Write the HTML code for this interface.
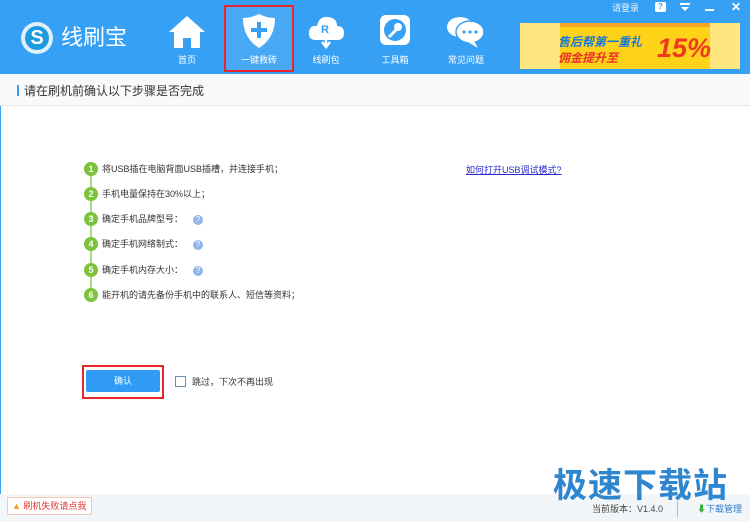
<!DOCTYPE html>
<html><head><meta charset="utf-8"><style>
*{margin:0;padding:0;box-sizing:border-box}
body{width:750px;height:522px;overflow:hidden;background:#fff;font-family:"Liberation Sans","Noto Sans CJK SC",sans-serif;position:relative}
.hdr{position:absolute;left:0;top:0;width:750px;height:74px;background:#36a0f5}
.abs{position:absolute}
.nav{position:absolute;top:12px;width:60px;text-align:center;color:#fff;font-size:9px}
.nav .lbl{position:absolute;top:41px;left:0;width:60px;text-align:center}
.sub{position:absolute;top:74px;left:0;width:750px;height:32px;background:#f7f9fa;border-bottom:1px solid #e6eaec}
.step{position:absolute;left:84px;font-size:9px;color:#333;height:14px;line-height:14px}
.step .n{position:absolute;left:0;top:0;width:14px;height:14px;border-radius:50%;background:#7cc33c;color:#fff;font-size:9px;text-align:center;line-height:14px;font-weight:bold}
.step .t{position:absolute;left:18px;top:0;white-space:nowrap}
.q{display:inline-block;width:10px;height:10px;border-radius:50%;background:#8fb6e6;color:#fff;font-size:8px;line-height:10px;text-align:center;margin-left:10px;vertical-align:middle}
</style></head><body>
<div style="position:absolute;left:0;top:0;width:1px;height:522px;background:#36a0f5"></div>
<div class="hdr">
  <div class="abs" style="left:21px;top:22px;width:32px;height:32px;border-radius:50%;background:#dfeffb;"></div>
  <div class="abs" style="left:25px;top:26px;width:24px;height:24px;border-radius:50%;background:#1d9be0;color:#fff;font-weight:bold;font-size:20px;line-height:24px;text-align:center">S</div>
  <div class="abs" style="left:61px;top:23px;color:#fff;font-size:22px;line-height:30px">线刷宝</div>

  <div class="nav" style="left:157px">
    <svg width="40" height="36" viewBox="0 0 40 36" style="margin-top:2px"><path d="M20 2 L38 18 L33 18 L33 34 L24 34 L24 24 L16 24 L16 34 L7 34 L7 18 L2 18 Z" fill="#fff"/></svg>
    <div class="lbl">首页</div></div>
  <div class="abs" style="left:224px;top:5px;width:70px;height:67px;border:2px solid #e8262b;background:#4aa9f5"></div>
  <div class="nav" style="left:229px">
    <svg width="40" height="38" viewBox="0 0 40 38"><path d="M20 2 Q28 6 36 6 Q36 26 20 36 Q4 26 4 6 Q12 6 20 2Z" fill="#fff"/><path d="M20 10v16M12 18h16" stroke="#36a0f5" stroke-width="4"/></svg>
    <div class="lbl">一键救砖</div></div>
  <div class="nav" style="left:296px">
    <svg width="40" height="38" viewBox="0 0 40 38"><path d="M10 28 Q2 28 3 20 Q4 13 11 14 Q13 4 22 5 Q31 6 31 14 Q38 14 38 21 Q38 28 31 28Z" fill="#fff"/><text x="15" y="21" font-size="11" font-weight="bold" fill="#36a0f5" font-family="Liberation Sans">R</text><path d="M20 24v10M16 30l4 5 4-5" stroke="#fff" stroke-width="2.5" fill="none"/></svg>
    <div class="lbl">线刷包</div></div>
  <div class="nav" style="left:365px">
    <svg width="40" height="38" viewBox="0 0 40 38"><rect x="5" y="3" width="30" height="30" rx="6" fill="#fff"/><circle cx="20" cy="18" r="11" fill="#36a0f5"/><path d="M14 25 L22 17" stroke="#fff" stroke-width="3"/><circle cx="23" cy="15" r="4" fill="#fff"/></svg>
    <div class="lbl">工具箱</div></div>
  <div class="nav" style="left:436px">
    <svg width="44" height="38" viewBox="0 0 44 38"><ellipse cx="16" cy="15" rx="13" ry="10" fill="#fff"/><ellipse cx="26" cy="20" rx="14" ry="11" fill="#fff" stroke="#36a0f5" stroke-width="1.5"/><path d="M30 29 L34 36 L24 30Z" fill="#fff"/><circle cx="20" cy="20" r="1.6" fill="#36a0f5"/><circle cx="26" cy="20" r="1.6" fill="#36a0f5"/><circle cx="32" cy="20" r="1.6" fill="#36a0f5"/></svg>
    <div class="lbl">常见问题</div></div>

  <div class="abs" style="left:612px;top:1px;color:#e8f4ff;font-size:9px">请登录</div>
  <div class="abs" style="left:655px;top:2px;width:11px;height:10px;background:#fff;border-radius:2px;color:#36a0f5;font-size:8px;text-align:center;line-height:10px;font-weight:bold">?</div>
  <div class="abs" style="left:680px;top:3px;width:10px;height:2px;background:#fff"></div>
  <div class="abs" style="left:681px;top:7px;width:0;height:0;border-left:4px solid transparent;border-right:4px solid transparent;border-top:4px solid #fff"></div>
  <div class="abs" style="left:705px;top:9px;width:9px;height:2px;background:#fff"></div>
  <div class="abs" style="left:731px;top:0px;color:#fff;font-size:12px;font-weight:bold">✕</div>

  <div class="abs" style="left:520px;top:23px;width:220px;height:46px;background:#ffd21a;overflow:hidden">
    <div class="abs" style="left:0;top:0;width:220px;height:4px;background:#f7a52a"></div>
    <div class="abs" style="left:0;top:0;width:40px;height:46px;background:#ffe680"></div>
    <div class="abs" style="left:190px;top:0;width:30px;height:46px;background:#ffe680"></div>
    <div class="abs" style="left:38px;top:10px;color:#1677d8;font-size:12px;font-weight:bold;font-style:italic;white-space:nowrap">售后帮第一重礼</div>
    <div class="abs" style="left:38px;top:26px;color:#e8332a;font-size:12px;font-weight:bold;font-style:italic;white-space:nowrap">佣金提升至</div>
    <div class="abs" style="left:137px;top:10px;color:#f0381e;font-size:27px;font-weight:bold;font-style:italic;line-height:30px">15%</div>
  </div>
</div>
<div class="sub">
  <div class="abs" style="left:17px;top:11px;width:2px;height:11px;background:#36a0f5"></div>
  <div class="abs" style="left:24px;top:8px;font-size:12px;color:#333">请在刷机前确认以下步骤是否完成</div>
</div>

<div class="abs" style="left:90px;top:170px;width:2px;height:125px;background:#a6dc8a"></div>
<div class="step" style="top:162px"><span class="n">1</span><span class="t">将USB插在电脑背面USB插槽，并连接手机；</span></div>
<div class="step" style="top:187px"><span class="n">2</span><span class="t">手机电量保持在30%以上；</span></div>
<div class="step" style="top:212px"><span class="n">3</span><span class="t">确定手机品牌型号：<span class="q">?</span></span></div>
<div class="step" style="top:237px"><span class="n">4</span><span class="t">确定手机网络制式：<span class="q">?</span></span></div>
<div class="step" style="top:263px"><span class="n">5</span><span class="t">确定手机内存大小：<span class="q">?</span></span></div>
<div class="step" style="top:288px"><span class="n">6</span><span class="t">能开机的请先备份手机中的联系人、短信等资料；</span></div>
<div class="abs" style="left:466px;top:163px;font-size:9px;color:#2a2acc;text-decoration:underline">如何打开USB调试模式?</div>

<div class="abs" style="left:82px;top:365px;width:82px;height:34px;border:2px solid #e8262b"></div>
<div class="abs" style="left:86px;top:370px;width:74px;height:22px;background:#2f9bf5;border-radius:2px;color:#fff;font-size:9px;text-align:center;line-height:22px">确认</div>
<div class="abs" style="left:175px;top:376px;width:11px;height:11px;border:1px solid #6d8fb0;background:#fff"></div>
<div class="abs" style="left:192px;top:375px;font-size:9px;color:#333">跳过，下次不再出现</div>

<div class="abs" style="left:0;top:494px;width:750px;height:28px;background:#f3f6f8"></div>
<div class="abs" style="left:7px;top:497px;width:85px;height:18px;border:1px solid #f1c8b0;background:#fff;font-size:9px;color:#e5322d;line-height:16px;padding-left:4px"><span style="color:#f0a020">▲</span> 刷机失败请点我</div>
<div class="abs" style="left:553px;top:466px;font-size:34px;font-weight:bold;color:#2e86cf;line-height:40px;letter-spacing:1px">极速下载站</div>
<div class="abs" style="left:592px;top:502px;font-size:9px;color:#444;white-space:nowrap">当前版本：V1.4.0</div>
<div class="abs" style="left:677px;top:501px;width:1px;height:16px;background:#bbb"></div>
<div class="abs" style="left:697px;top:502px;font-size:9px;color:#2a7ccc;white-space:nowrap"><span style="color:#3bb43b">⬇</span>下载管理</div>
</body></html>
